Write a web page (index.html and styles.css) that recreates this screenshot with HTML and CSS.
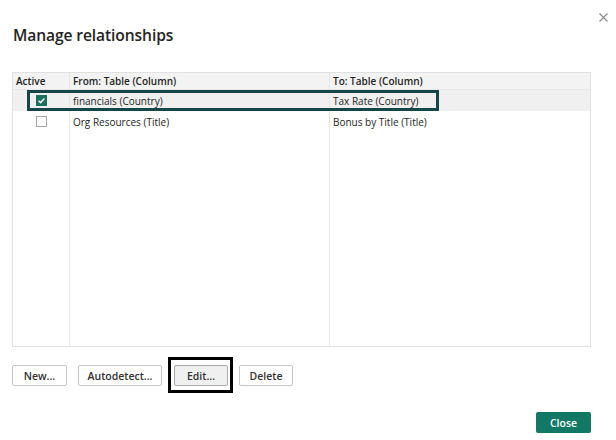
FILE: index.html
```html
<!DOCTYPE html>
<html>
<head>
<meta charset="utf-8">
<link rel="stylesheet" href="styles.css">
</head>
<body>
<div class="dialog">
  <button class="close-x" aria-label="Close">
    <svg width="9" height="9" viewBox="0 0 9 9"><path d="M0.5 0.5L8.5 8.5M8.5 0.5L0.5 8.5" stroke="#8a8a8a" stroke-width="1.1" fill="none"/></svg>
  </button>
  <h1 class="title">Manage relationships</h1>
  <div class="table">
    <div class="row head">
      <div class="cell c-active">Active</div>
      <div class="cell c-from">From: Table (Column)</div>
      <div class="cell c-to">To: Table (Column)</div>
    </div>
    <div class="row selected">
      <div class="cell c-active"><span class="cb checked"><svg width="9" height="9" viewBox="0 0 9 9"><path d="M1.6 4.8L3.6 6.6L7.4 2.4" stroke="#fff" stroke-width="1.5" fill="none"/></svg></span></div>
      <div class="cell c-from">financials (Country)</div>
      <div class="cell c-to">Tax Rate (Country)</div>
      <div class="mark"></div>
    </div>
    <div class="row">
      <div class="cell c-active"><span class="cb"></span></div>
      <div class="cell c-from">Org Resources (Title)</div>
      <div class="cell c-to">Bonus by Title (Title)</div>
    </div>
    <div class="row filler">
      <div class="cell c-active"></div>
      <div class="cell c-from"></div>
      <div class="cell c-to"></div>
    </div>
  </div>
  <div class="actions">
    <button class="btn w-new">New...</button>
    <button class="btn w-auto">Autodetect...</button>
    <button class="btn w-edit focused">Edit...</button>
    <button class="btn w-del">Delete</button>
  </div>
  <div class="footer">
    <button class="primary">Close</button>
  </div>
</div>
</body>
</html>
```
FILE: styles.css
```css
* { box-sizing: border-box; }
html, body { margin: 0; padding: 0; background: #fff; }
body { width: 616px; height: 440px; overflow: hidden; font-family: "Open Sans", "Noto Sans", sans-serif; color: #252423; }
.dialog { position: relative; width: 616px; height: 440px; padding: 0 0 0 12px; display: flex; flex-direction: column; }
.close-x { position: absolute; top: 13px; left: 599px; width: 9px; height: 9px; padding: 0; border: 0; background: none; display: block; }
.close-x svg { display: block; }
.title { margin: 23px 0 0 1px; font-size: 15.6px; font-weight: 600; line-height: 24px; color: #252423; letter-spacing: -0.1px; }
.table { margin-top: 25px; width: 579px; height: 275px; border: 1px solid #e1e1e1; display: flex; flex-direction: column; font-size: 10px; }
.row { position: relative; display: flex; height: 21px; }
.row.head { height: 17px; background: #f3f3f3; font-weight: 600; border-bottom: 1px solid #e6e6e6; }
.row.selected { background: #f0f0f0; }
.row.filler { flex: 1; }
.cell { display: flex; align-items: center; line-height: 14px; white-space: nowrap; }
.c-active { width: 57px; flex: none; justify-content: center; border-right: 1px solid #e6e6e6; }
.head .c-active { justify-content: flex-start; padding-left: 3px; }
.c-from { width: 260px; flex: none; padding-left: 3px; border-right: 1px solid #e6e6e6; }
.c-to { flex: 1; padding-left: 3px; }
.cb { width: 11px; height: 11px; border: 1px solid #a8a8a8; background: #fff; display: flex; align-items: center; justify-content: center; }
.cb.checked { background: #1a6f5e; border-color: #1a6f5e; }
.cb svg { display: block; }
.mark { position: absolute; left: 14px; top: 0; width: 412px; height: 21px; border: 3px solid #15474a; pointer-events: none; }
.actions { display: flex; gap: 11px; margin-top: 18px; }
.btn { height: 21px; padding: 0; border: 1px solid #c8c6c4; border-radius: 2px; background: #fff; font-family: inherit; font-size: 10.5px; font-weight: 600; color: #323130; position: relative; }
.w-new { width: 55px; }
.w-auto { width: 84px; }
.w-edit { width: 54px; margin-left: 1px; background: #f0f0f0; border-color: #a9a9a9; }
.w-del { width: 54px; }
.focused::after { content: ""; position: absolute; left: -7px; right: -6px; top: -9px; bottom: -8px; border: 3px solid #000; }
.footer { display: flex; justify-content: flex-end; width: 579px; margin-top: 26px; }
.primary { width: 55px; height: 21px; padding: 0; border: 0; border-radius: 2px; background: #117865; color: #fff; font-family: inherit; font-size: 10.5px; font-weight: 600; }
```
